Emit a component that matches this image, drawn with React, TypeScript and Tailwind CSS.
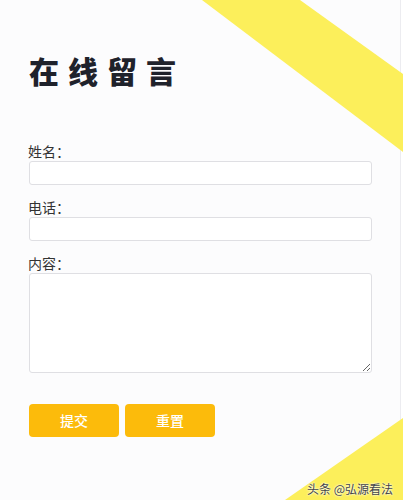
import React from "react";

export default function App() {
  const cjk = { fontFamily: '"Noto Sans CJK SC", "Noto Sans", sans-serif' };
  return (
    <div className="relative w-[403px] h-[500px] overflow-hidden bg-white" style={cjk}>
      <div className="absolute inset-y-0 left-0 w-[401px] bg-[#fcfcfd] border-r border-[#ececf0]" />
      <svg className="absolute inset-0" width="403" height="500" viewBox="0 0 403 500">
        <polygon points="202,0 300,0 403,74 403,152" fill="#fcef5b" />
        <polygon points="285,500 403,418 403,500" fill="#fcef5b" />
      </svg>
      <div className="relative flex flex-col pl-[29px] pt-[55px]">
        <h1 className="text-[30px] leading-[30px] font-black tracking-[9px] text-[#1f222b]">在线留言</h1>
        <form className="mt-[58px] flex flex-col w-[343px]">
          <label className="text-[14px] leading-[16px] text-[#333] -ml-[1px]">姓名：</label>
          <input className="mt-[2px] h-[24px] w-full rounded-[3px] border border-[#dfdfe3] bg-white outline-none" />
          <label className="mt-[14px] text-[14px] leading-[16px] text-[#333] -ml-[1px]">电话：</label>
          <input className="mt-[2px] h-[24px] w-full rounded-[3px] border border-[#dfdfe3] bg-white outline-none" />
          <label className="mt-[14px] text-[14px] leading-[16px] text-[#333] -ml-[1px]">内容：</label>
          <textarea className="mt-[2px] h-[100px] w-full rounded-[3px] border border-[#dfdfe3] bg-white outline-none" />
          <div className="mt-[31px] flex gap-[6px]">
            <button type="button" className="h-[33px] w-[90px] rounded-[4px] bg-[#fcbb0b] text-[14px] font-medium text-white">提交</button>
            <button type="button" className="h-[33px] w-[90px] rounded-[4px] bg-[#fcbb0b] text-[14px] font-medium text-white">重置</button>
          </div>
        </form>
      </div>
      <div className="absolute right-[10px] bottom-[3px] text-[12px] leading-[16px] text-[#444] [text-shadow:0_0_2px_#fff,0_0_2px_#fff]">
        头条 @弘源看法
      </div>
    </div>
  );
}
